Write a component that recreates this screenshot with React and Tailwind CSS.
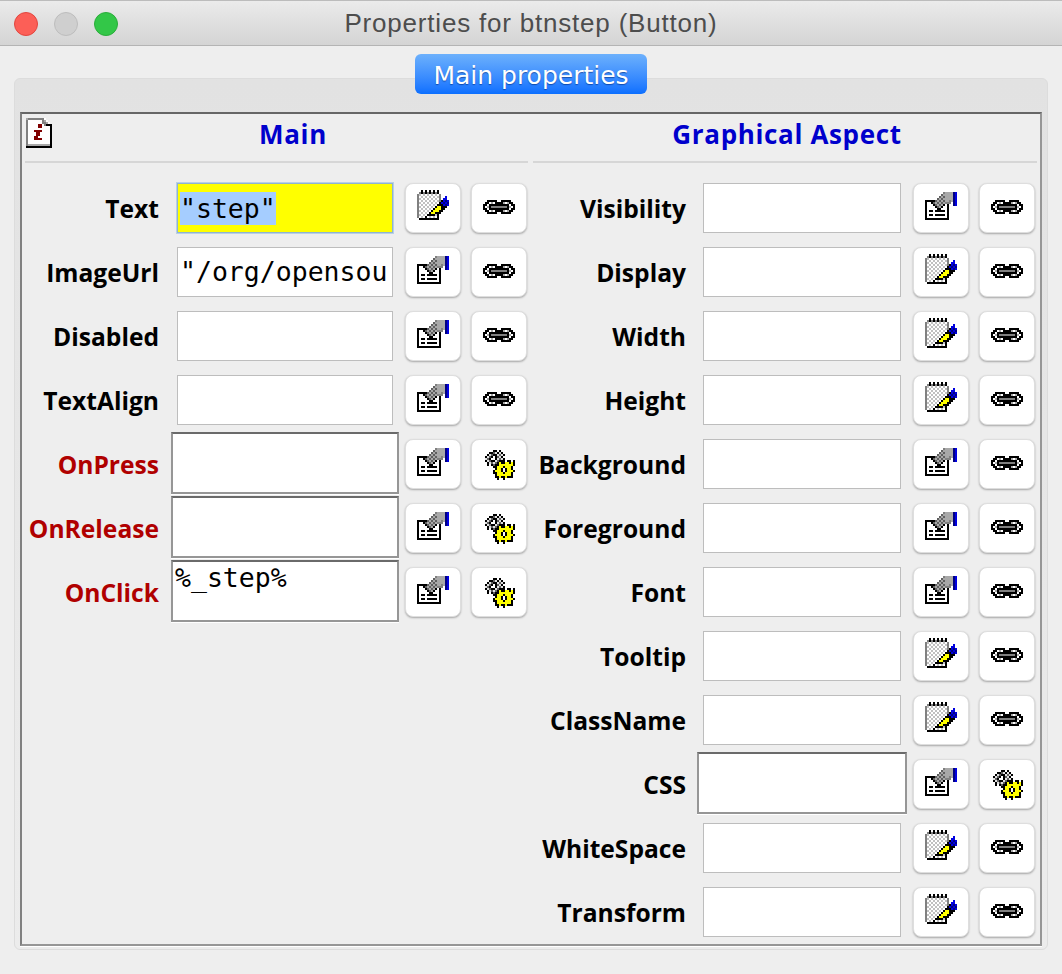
/* ===================== Pixel icons (2px cells) ===================== */

const COLORS = {
  K: "#000000",
  G: "#808080",
  L: "#a8a8a8",
  W: "#ffffff",
  B: "#0000e0",
  N: "#000080",
  Y: "#ffff00",
  R: "#800000",
};

const NOTE = [
  "..K.K.K.K.K.....",
  ".GKGKGKGKGK.....",
  "GCCCCCCCCCCG....",
  "GCCCCCCCCCCG..B.",
  "GCCCCCCCCCCG.BB.",
  "GCCCCCCCCCCGKBNB",
  "GCCCCCCCCCCKBNBN",
  "GCCCCCCCCCKKKBNB",
  "GCCCCCCCCKYYKKK.",
  "GCCCCCCCKYYYKK..",
  "GCCCCCCKYYYKK...",
  "GCCCCCKYYKKK....",
  "GCCCCKKKKCK.....",
  "GCCCKCCCCCK.....",
  ".KKKKKKKKKK.....",
  "................",
  "................",
  "................",
];

const FORM = [
  ".........GLLLLNB",
  "........DLLLLLNB",
  ".......DLDLLLLNB",
  "......DLDLLLLLNB",
  "KKKKKDLDLDLLGLNB",
  "KWWKDLDLDLGGG.NB",
  "KWWWKDLDLKWK..NB",
  "KWWWWKDLKWWK....",
  "KWWWWWKKWWWK....",
  "KWKKWKKKKKWK....",
  "KWWWWWWWWWWK....",
  "KWKKWKKKKKWK....",
  "KWWWWWWWWWWK....",
  "KKKKKKKKKKKK....",
  "................",
  "................",
];

const GEAR = [
  "................",
  ".....KK.K.......",
  "...KKDDKDK......",
  "..KDDKKDDDK.....",
  ".KDDK.KDDK......",
  ".DDK..KDDDK.....",
  ".KDDKKDDKKK.KK.K",
  "..KDDDDKYKKYYKYK",
  "..K.KDKKYYYYYYYK",
  ".....KKYYYKYYYK.",
  "......KYYKWKYYK.",
  ".....KYYYKWKYYYK",
  ".....KKYYYKYYYK.",
  "......KYYYYYYYK.",
  "......KKYKKYKKK.",
  ".......K..K.....",
];

const LINK = [
  "................",
  "................",
  "................",
  "..KKKKK..KKKKK..",
  ".KKWLWKKKKLWLKK.",
  "KKWKKKKKKKKKKWKK",
  "KWLKGGGGGGGGKLWK",
  "KKWKKKKKKKKKKWKK",
  ".KKWLWKKKKLWLKK.",
  "..KKKKK..KKKKK..",
  "................",
  "................",
  "................",
  "................",
];

const INFO = [
  "LGGGGGGGGW...",
  "GWWWWWWWGLW..",
  "GWWWWWWWGGLW.",
  "GWWWWWRRWGKKK",
  "GWWWWWRRWWWWK",
  "GWWWWWWWWWWWK",
  "GWWWRRRRWWWWK",
  "GWWWWRRWWWWWK",
  "GWWWWRRWWWWWK",
  "GWWWRRWWWWWWK",
  "GWWWRRRRWWWWK",
  "GWWWWWWWWWWWK",
  "GWWWWWWWWWWWK",
  "GLLLLLLLLLLLK",
  "KKKKKKKKKKKKK",
];

function cellColor(ch, x, y) {
  if (ch === "C") return (x + y) % 2 ? "#c0c0c0" : "#ffffff";
  if (ch === "D") return (x + y) % 2 ? "#606060" : "#e0e0e0";
  return COLORS[ch];
}

function PixelIcon({ rows }) {
  const cols = rows[0].length;
  return (
    <svg
      width={cols * 2}
      height={rows.length * 2}
      viewBox={`0 0 ${cols} ${rows.length}`}
      shapeRendering="crispEdges"
    >
      {rows.flatMap((row, y) =>
        row.split("").map((ch, x) =>
          ch === "." ? null : (
            <rect key={`${x}-${y}`} x={x} y={y} width="1" height="1" fill={cellColor(ch, x, y)} />
          )
        )
      )}
    </svg>
  );
}

/* ===================== Form rows ===================== */

const MAIN_ROWS = [
  { label: "Text", value: '"step"', selected: true, icon: NOTE, action: LINK },
  { label: "ImageUrl", value: '"/org/opensou', icon: FORM, action: LINK },
  { label: "Disabled", icon: FORM, action: LINK },
  { label: "TextAlign", icon: FORM, action: LINK },
  { label: "OnPress", multi: true, icon: FORM, action: GEAR },
  { label: "OnRelease", multi: true, icon: FORM, action: GEAR },
  { label: "OnClick", multi: true, value: "%_step%", icon: FORM, action: GEAR },
];

const ASPECT_ROWS = [
  { label: "Visibility", icon: FORM, action: LINK },
  { label: "Display", icon: NOTE, action: LINK },
  { label: "Width", icon: NOTE, action: LINK },
  { label: "Height", icon: NOTE, action: LINK },
  { label: "Background", icon: FORM, action: LINK },
  { label: "Foreground", icon: FORM, action: LINK },
  { label: "Font", icon: FORM, action: LINK },
  { label: "Tooltip", icon: NOTE, action: LINK },
  { label: "ClassName", icon: NOTE, action: LINK },
  { label: "CSS", multi: true, icon: FORM, action: GEAR },
  { label: "WhiteSpace", icon: NOTE, action: LINK },
  { label: "Transform", icon: NOTE, action: LINK },
];

function IconButton({ rows }) {
  return (
    <button
      type="button"
      className="w-[56px] h-[50px] shrink-0 flex items-center justify-center bg-white rounded-[8px] border border-[#dedede] shadow-[0_1px_2px_rgba(0,0,0,0.3)]"
    >
      <PixelIcon rows={rows} />
    </button>
  );
}

function Field({ row, width }) {
  const mono = "font-['DejaVu_Sans_Mono',monospace] text-[26.5px] text-black whitespace-nowrap";

  if (row.multi) {
    return (
      <div className={`${width} h-[50px] shrink-0 relative`}>
        <div
          className={`${mono} absolute -inset-x-[6px] -top-[7px] -bottom-[5px] bg-white border-2 border-[#969696] border-t-[#6a6a6a] leading-[32px] pl-[2px] shadow-[0_1px_0_#ffffff]`}
        >
          {row.value}
        </div>
      </div>
    );
  }

  if (row.selected) {
    return (
      <div
        className={`${mono} ${width} h-[50px] shrink-0 flex items-center pl-[2px] bg-[#ffff00] border border-[#8fb4d0] shadow-[0_0_0_1px_rgba(120,170,220,0.45)]`}
      >
        <span className="bg-[#a5cdff] h-[33px] leading-[33px]">{row.value}</span>
      </div>
    );
  }

  return (
    <div className={`${mono} ${width} h-[50px] shrink-0 flex items-center pl-[2px] bg-white border border-[#bdbdbd]`}>
      {row.value}
    </div>
  );
}

function Row({ row, labelWidth, labelGap, fieldWidth }) {
  return (
    <div className="flex items-center h-[50px]">
      <div
        className={`${labelWidth} ${labelGap} shrink-0 pt-[2px] text-right text-[24.6px] font-bold ${
          row.multi && row.label !== "CSS" ? "text-[#b00000]" : "text-black"
        }`}
      >
        {row.label}
      </div>
      <Field row={row} width={fieldWidth} />
      <div className="flex gap-[10px] ml-[12px]">
        <IconButton rows={row.icon} />
        <IconButton rows={row.action} />
      </div>
    </div>
  );
}

export default function App() {
  return (
    <div className="w-[1062px] h-[974px] overflow-hidden bg-[#eeeeee] font-['Open_Sans',sans-serif]">
      {/* Title bar */}
      <div className="h-[46px] pt-[1px] grid grid-cols-[1fr_auto_1fr] items-center bg-gradient-to-b from-[#ebebeb] to-[#d4d4d4] border-t border-t-[#bcbcbc] border-b border-b-[#b4b4b4]">
        <div className="flex gap-[16px] pl-[14px]">
          <div className="w-[24px] h-[24px] rounded-full bg-[#fc5f57] border border-[#e2463f]" />
          <div className="w-[24px] h-[24px] rounded-full bg-[#cfcfcf] border border-[#bdbdbd]" />
          <div className="w-[24px] h-[24px] rounded-full bg-[#33c748] border border-[#2aad3b]" />
        </div>
        <div className="font-['Liberation_Sans',sans-serif] text-[26px] tracking-[0.8px] text-[#4d4d4d]">
          Properties for btnstep (Button)
        </div>
        <div />
      </div>

      {/* Tab */}
      <div className="relative z-10 flex justify-center pt-[8px]">
        <div className="w-[232px] h-[40px] pt-[3px] flex items-center justify-center rounded-[6px] bg-gradient-to-b from-[#6cb0fc] to-[#0a6fff] text-white text-[25px] [text-shadow:0_1px_1px_rgba(0,40,120,0.6)] font-['DejaVu_Sans',sans-serif]">
          Main properties
        </div>
      </div>

      {/* Tab panel */}
      <div className="mx-[14px] -mt-[16px] w-[1034px] h-[872px] pt-[33px] px-[5px] pb-[3px] rounded-[6px] border border-[#dcdcdc] bg-gradient-to-b from-[#e2e2e2] to-[#ececec]">
        <div className="h-[834px] flex bg-[#eeeeee] border-2 border-[#969696] border-t-[#666666] border-l-[#808080] shadow-[0_1px_0_#ffffff]">
          {/* Main column */}
          <div className="w-[508px] shrink-0 flex flex-col">
            <div className="h-[49px] ml-[3px] mr-[2px] flex items-start border-b-2 border-[#d6d6d6]">
              <div className="pl-[1px] pt-[4px]">
                <PixelIcon rows={INFO} />
              </div>
              <div className="flex-1 text-center text-[26px] tracking-[0.65px] font-bold text-[#0000cc] pl-[6px] pt-[1px]">Main</div>
            </div>
            <div className="flex flex-col gap-[14px] pt-[20px]">
              {MAIN_ROWS.map((row) => (
                <Row
                  key={row.label}
                  row={row}
                  labelWidth="w-[137px]"
                  labelGap="mr-[18px]"
                  fieldWidth="w-[216px]"
                />
              ))}
            </div>
          </div>

          {/* Graphical aspect column */}
          <div className="flex-1 flex flex-col">
            <div className="h-[49px] ml-[3px] mr-[3px] pl-[4px] pt-[1px] flex items-start justify-center border-b-2 border-[#d6d6d6] text-[26px] tracking-[0.65px] font-bold text-[#0000cc]">
              Graphical Aspect
            </div>
            <div className="flex flex-col gap-[14px] pt-[20px]">
              {ASPECT_ROWS.map((row) => (
                <Row
                  key={row.label}
                  row={row}
                  labelWidth="w-[156px]"
                  labelGap="mr-[17px]"
                  fieldWidth="w-[198px]"
                />
              ))}
            </div>
          </div>
        </div>
      </div>
    </div>
  );
}
